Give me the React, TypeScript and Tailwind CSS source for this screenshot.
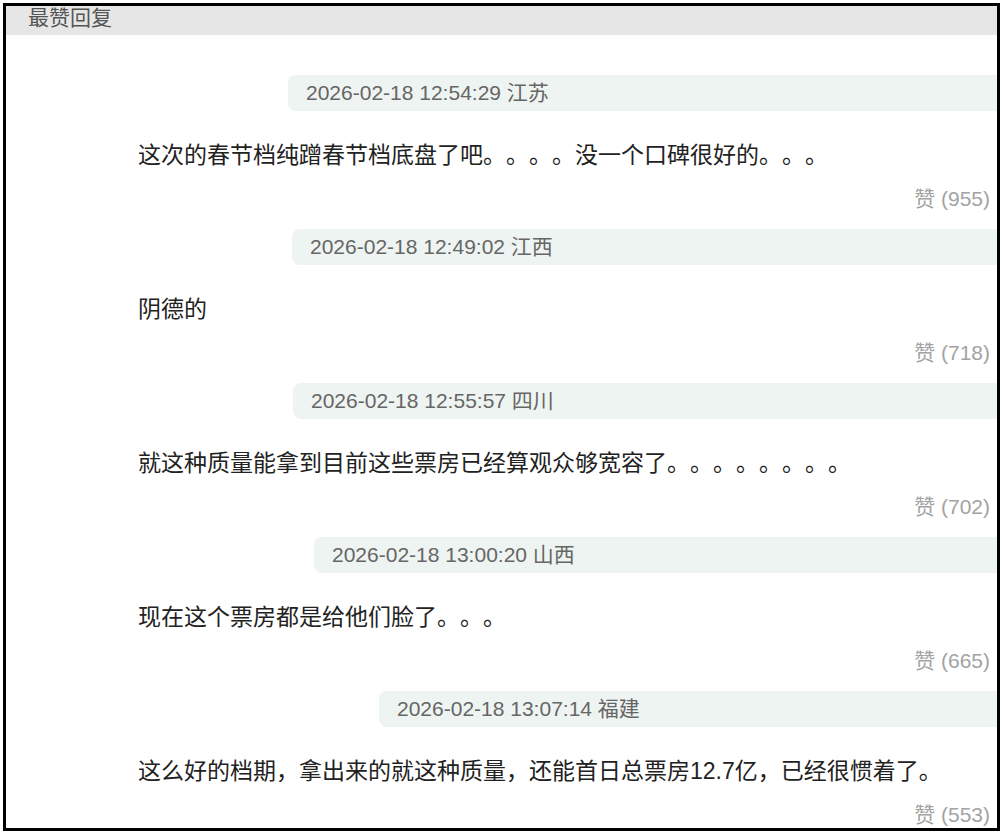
const replies = [
  {
    time: "2026-02-18 12:54:29 江苏",
    offset: "ml-[282px]",
    text: "这次的春节档纯蹭春节档底盘了吧。。。。没一个口碑很好的。。。",
    likes: 955,
  },
  {
    time: "2026-02-18 12:49:02 江西",
    offset: "ml-[286px]",
    text: "阴德的",
    likes: 718,
  },
  {
    time: "2026-02-18 12:55:57 四川",
    offset: "ml-[287px]",
    text: "就这种质量能拿到目前这些票房已经算观众够宽容了。。。。。。。。",
    likes: 702,
  },
  {
    time: "2026-02-18 13:00:20 山西",
    offset: "ml-[308px]",
    text: "现在这个票房都是给他们脸了。。。",
    likes: 665,
  },
  {
    time: "2026-02-18 13:07:14 福建",
    offset: "ml-[373px]",
    text: "这么好的档期，拿出来的就这种质量，还能首日总票房12.7亿，已经很惯着了。",
    likes: 553,
  },
];

function ReplyItem({ reply }: { reply: (typeof replies)[number] }) {
  return (
    <div className="flex flex-col">
      <div
        className={`${reply.offset} h-[36px] bg-[#eef4f1] rounded-l-[8px] pl-[18px] text-[21px] leading-[36px] text-[#666666]`}
      >
        {reply.time}
      </div>
      <p className="mt-[28px] pl-[132px] text-[23px] leading-[32px] text-[#222222] [text-spacing-trim:space-all]">
        {reply.text}
      </p>
      <div className="mt-[14px] mb-[16px] pr-[7px] text-right text-[21px] leading-[28px] text-[#a3a3a3]">
        赞 ({reply.likes})
      </div>
    </div>
  );
}

export default function App() {
  return (
    <div
      className="w-[1003px] h-[834px] bg-white p-[3px] [text-spacing-trim:space-all]"
      style={{ fontFamily: '"Liberation Sans", "Noto Sans CJK SC", sans-serif' }}
    >
      <div className="h-full border-[3px] border-black overflow-hidden">
        <div className="h-[29px] bg-[#e6e6e6] pl-[22px] text-[21px] leading-[24px] text-[#555555]">
          最赞回复
        </div>
        <div className="pt-[40px] flex flex-col">
          {replies.map((r) => (
            <ReplyItem key={r.time} reply={r} />
          ))}
        </div>
      </div>
    </div>
  );
}
